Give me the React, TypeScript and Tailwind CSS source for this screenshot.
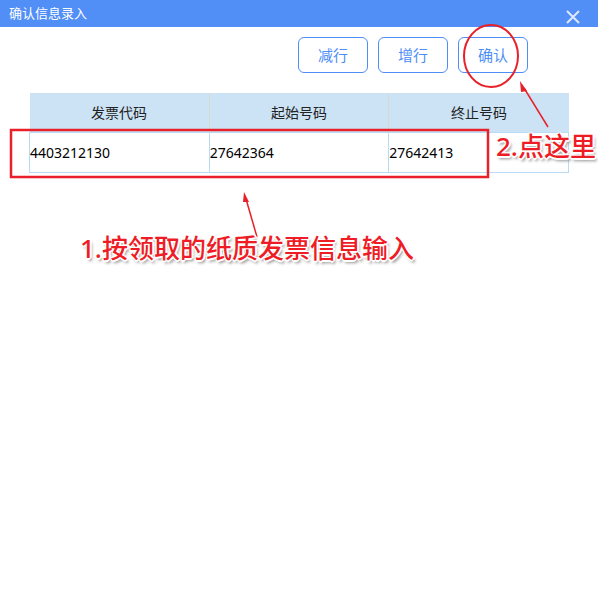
const cols = ["发票代码", "起始号码", "终止号码"]
const row = ["4403212130", "27642364", "27642413"]

const noteStyle =
  "absolute whitespace-nowrap text-[26px] font-medium leading-none text-[#ee1c25] [text-shadow:1px_1px_0_#fff,-1px_-1px_0_#fff,1px_-1px_0_#fff,-1px_1px_0_#fff,0_2px_0_#fff,2px_0_0_#fff,2px_3px_3px_#8a8a8a]"

export default function App() {
  return (
    <div className="relative w-[598px] h-[593px] bg-white overflow-hidden font-['Noto_Sans','Noto_Sans_CJK_SC',sans-serif]">
      <header className="h-[27px] bg-[#518ef6] flex items-center justify-between pl-[9px] pr-[18px]">
        <span className="text-[13px] text-white leading-none">确认信息录入</span>
        <svg width="14" height="14" viewBox="0 0 14 14" className="mt-[6px]">
          <path d="M1 1 L13 13 M13 1 L1 13" stroke="#dfe9fd" strokeWidth="2" />
        </svg>
      </header>

      <div className="flex justify-end gap-[10px] pr-[70px] pt-[10px]">
        {["减行", "增行", "确认"].map((t) => (
          <button
            key={t}
            className="w-[70px] h-[36px] rounded-[6px] border border-[#4d8ef7] text-[15px] text-[#4d8ef7] bg-white"
          >
            {t}
          </button>
        ))}
      </div>

      <table className="ml-[29px] mt-[20px] w-[540px] border-collapse table-fixed">
        <thead>
          <tr className="h-[39px] bg-[#cce3f6]">
            {cols.map((c, i) => (
              <th
                key={c}
                className={`font-normal text-[14px] text-[#222] ${i > 0 ? "border-l border-[#d7d7d7]" : ""}`}
              >
                {c}
              </th>
            ))}
          </tr>
        </thead>
        <tbody>
          <tr className="h-[40px]">
            {row.map((v) => (
              <td key={v} className="border border-[#b8daf4] px-0 text-[14px] text-black">
                {v}
              </td>
            ))}
          </tr>
        </tbody>
      </table>

      <svg className="absolute inset-0 pointer-events-none" width="598" height="593">
        <rect x="11" y="130" width="477" height="47" fill="none" stroke="#e8202a" strokeWidth="2.5" />
        <ellipse cx="491" cy="56" rx="27" ry="31" fill="none" stroke="#e8202a" strokeWidth="2" />
        <line x1="548" y1="127" x2="524" y2="88" stroke="#e8202a" strokeWidth="1.5" />
        <polygon points="520,81 527,91 521,92" fill="#e8202a" />
        <line x1="257" y1="237" x2="246" y2="199" stroke="#e8202a" strokeWidth="1.5" />
        <polygon points="244,192 249,202 243,202" fill="#e8202a" />
      </svg>

      <div className={`${noteStyle} left-[80px] top-[235px]`}>1.按领取的纸质发票信息输入</div>
      <div className={`${noteStyle} left-[496px] top-[133px]`}>2.点这里</div>
    </div>
  )
}
